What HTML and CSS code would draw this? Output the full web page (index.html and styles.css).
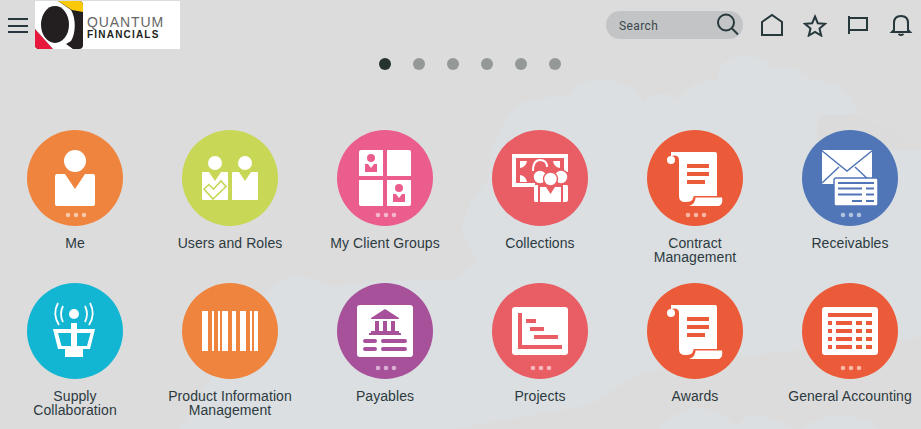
FILE: index.html
```html
<!DOCTYPE html>
<html lang="en">
  <head>
    <meta charset="UTF-8" />
    <title>Quantum Financials</title>
    <link rel="stylesheet" href="styles.css">
  </head>
  <body>
    <svg class="clouds" viewBox="0 0 921 429" aria-hidden="true">
      <path d="M500 132 C505 118 514 107 523 102 C538 97 552 96 567 97 C572 90 578 85 583 83 C592 79 600 79 607 80 C617 81 625 84 630 87 C636 92 641 98 644 103 C648 97 654 94 660 94 C668 94 675 96 680 100 C685 92 691 86 697 83 C704 80 711 80 718 80 C718 72 720 67 723 63 C730 57 739 55 747 55 C757 56 766 62 773 68 C779 67 785 67 790 68 C799 70 807 75 813 80 C823 81 832 83 840 87 C850 93 855 103 858 113 C870 116 880 122 887 127 L900 135 L921 150 V337 L733 357 L640 373 L590 405 L453 429 H180 L190 412 L263 295 L273 285 C282 279 291 277 300 277 C312 278 324 282 333 287 L385 281 L453 280 L470 268 L478 260 L467 245 C462 236 461 229 463 222 C468 204 477 190 487 182 L492 148 Z" />
      <path class="cloud-shade" d="M817 123 C820 118 823 116 827 115 L858 114 L887 127 L921 150 H860 L817 140 Z" />
      <path d="M660 429 C670 415 684 408 697 408 C712 408 727 416 737 427 C742 419 747 415 753 415 C765 415 780 421 795 429 H800 C812 421 826 415 840 415 C855 415 870 421 880 429 Z" />
    </svg>

    <header class="top-bar">
      <div class="brand">
        <button class="hamburger" aria-label="Menu"><span></span><span></span><span></span></button>
        <div class="logo">
          <svg class="logo-mark" viewBox="0 0 48 48">
            <rect width="48" height="48" rx="4" fill="#231f20" />
            <path d="M0 28 L18 48 H4 Q0 48 0 44 Z" fill="#e8173c" />
            <path d="M23 0 H44 Q48 0 48 4 V11 L37 9 Z" fill="#fbc90a" />
            <path d="M0 0 H23 L36 9 C41 17 41 32 36 40 L31 43 L38 48 H18 L0 28 Z" fill="#fff" />
            <ellipse cx="20" cy="23.500" rx="14" ry="18.500" fill="#231f20" />
          </svg>
          <div class="logo-text">
            <span class="logo-top">QUANTUM</span>
            <span class="logo-bottom">FINANCIALS</span>
          </div>
        </div>
      </div>
      <div class="actions">
        <div class="search">
          <span class="search-text">Search</span>
          <svg class="search-icon" viewBox="0 0 26 26"><circle cx="11" cy="10.5" r="8" /><path d="M17 16.5 L23 22.5" /></svg>
        </div>
        <svg class="action" viewBox="0 0 24 24"><path d="M2 22 V9 L12 2 L22 9 V22 Z" /></svg>
        <svg class="action" viewBox="0 0 24 24"><path d="M12 3.5 L14.8 10.2 L22 10.8 L16.5 15.5 L18.2 22.5 L12 18.8 L5.8 22.5 L7.5 15.5 L2 10.800 L9.2 10.2 Z" /></svg>
        <svg class="action" viewBox="0 0 24 24"><path d="M3 3 V21 M3 5 H21 V17 H3" /></svg>
        <svg class="action" viewBox="0 0 24 24"><path d="M5 17 V10 C5 5 8 3 12 3 C16 3 19 5 19 10 V17 L21 19 H3 Z M9.500 21 Q12 23 14.500 21" /></svg>
      </div>
    </header>

    <div class="pager">
      <span class="pager-dot active"></span>
      <span class="pager-dot"></span>
      <span class="pager-dot"></span>
      <span class="pager-dot"></span>
      <span class="pager-dot"></span>
      <span class="pager-dot"></span>
    </div>

    <main class="grid">
      <a class="tile">
        <svg class="circle orange" viewBox="0 0 96 96">
          <circle cx="48" cy="31" r="11" fill="#fff" />
          <path d="M30 44 H38 L48 59 L58 44 H66 Q68 44 68 46 V74 Q68 76 66 76 H30 Q28 76 28 74 V46 Q28 44 30 44 Z" fill="#fff" />
          <g class="more"><circle cx="41" cy="85" r="2.3" /><circle cx="49" cy="85" r="2.3" /><circle cx="57" cy="85" r="2.3" /></g>
        </svg>
        <span class="label">Me</span>
      </a>

      <a class="tile">
        <svg class="circle lime" viewBox="0 0 96 96">
          <circle cx="33" cy="33" r="7" fill="#fff" />
          <circle cx="63" cy="33" r="7" fill="#fff" />
          <path d="M21 42 H27 L33 51 L39 42 H45 Q46 42 46 43 V69 Q46 70 45 70 H21 Q20 70 20 69 V43 Q20 42 21 42 Z" fill="#fff" />
          <path d="M51 42 H57 L63 51 L69 42 H75 Q76 42 76 43 V69 Q76 70 75 70 H51 Q50 70 50 69 V43 Q50 42 51 42 Z" fill="#fff" />
          <path d="M22 59 L27 54.5 L31.5 59 L39 51 L44 56.5 L31 69 Z" fill="none" stroke="#c8d755" stroke-width="1.6" />
        </svg>
        <span class="label">Users and Roles</span>
      </a>

      <a class="tile">
        <svg class="circle pink" viewBox="0 0 96 96">
          <path d="M24 20 H46 V46 H22 V22 Q22 20 24 20 Z" fill="#fff" />
          <path d="M50 20 H72 Q74 20 74 22 V46 H50 Z" fill="#fff" />
          <path d="M22 50 H46 V76 H24 Q22 76 22 74 Z" fill="#fff" />
          <path d="M50 50 H74 V74 Q74 76 72 76 H50 Z" fill="#fff" />
          <circle cx="34" cy="28" r="4" fill="#ea5d8c" />
          <path d="M28 34 H31 L34 38 L37 34 H40 V42 H28 Z" fill="#ea5d8c" />
          <circle cx="62" cy="58" r="4" fill="#ea5d8c" />
          <path d="M56 64 H59 L62 68 L65 64 H68 V72 H56 Z" fill="#ea5d8c" />
          <g class="more"><circle cx="41" cy="85" r="2.3" /><circle cx="49" cy="85" r="2.3" /><circle cx="57" cy="85" r="2.3" /></g>
        </svg>
        <span class="label">My Client Groups</span>
      </a>

      <a class="tile">
        <svg class="circle coral" viewBox="0 0 96 96">
          <path d="M20 24 H76 V42 H72 V28 H24 V53 H43 V57 H20 Z" fill="#fff" />
          <path d="M28 31 H35 Q34 37 28 38 Z M68 31 H61 Q62 37 68 38 Z M28 52 V45 Q34 46 35 52 Z" fill="#fff" />
          <path d="M41 41 Q41 30 48 30 Q55 30 55 37" fill="none" stroke="#fff" stroke-width="2" />
          <circle cx="48" cy="47" r="7" fill="#fff" stroke="#e95d64" stroke-width="1.5" />
          <circle cx="69" cy="47" r="7" fill="#fff" stroke="#e95d64" stroke-width="1.5" />
          <circle cx="58.500" cy="49" r="7" fill="#fff" stroke="#e95d64" stroke-width="1.500" />
          <path d="M42 55 H46 V72 H43 Q42 72 42 70 Z M71 55 H75 Q76 55 76 57 V70 Q76 72 74 72 H71 Z" fill="#fff" />
          <path d="M48 57 H54 L58.500 64 L63 57 H69 V72 H48 Z" fill="#fff" />
        </svg>
        <span class="label">Collections</span>
      </a>

      <a class="tile">
        <svg class="circle tomato" viewBox="0 0 96 96">
          <use href="#scroll" />
          <g class="more"><circle cx="41" cy="85" r="2.3" /><circle cx="49" cy="85" r="2.3" /><circle cx="57" cy="85" r="2.3" /></g>
        </svg>
        <span class="label">Contract Management</span>
      </a>

      <a class="tile">
        <svg class="circle blue" viewBox="0 0 96 96">
          <rect x="20" y="20" width="50" height="34" fill="#fff" />
          <path d="M19 20 L45 41 L71 20 M20 53 L37 37 M53 37 L70 53" fill="none" stroke="#5076b8" stroke-width="1.500" />
          <rect x="32" y="48" width="44" height="28" rx="2" fill="#fff" stroke="#5076b8" stroke-width="1.500" />
          <path d="M36 53 H72 M36 58.500 H60 M64 58.500 H72 M36 64.500 H60 M64 64.500 H72 M50 71 H60 M64 71 H72" stroke="#5076b8" stroke-width="1.800" />
          <g class="more"><circle cx="41" cy="85" r="2.3" /><circle cx="49" cy="85" r="2.3" /><circle cx="57" cy="85" r="2.3" /></g>
        </svg>
        <span class="label">Receivables</span>
      </a>

      <a class="tile">
        <svg class="circle cyan" viewBox="0 0 96 96">
          <circle cx="47" cy="31" r="5" fill="#fff" />
          <path d="M36 23 Q32 31 36 39 M58 23 Q62 31 58 39" fill="none" stroke="#fff" stroke-width="1.8" />
          <path d="M31 20 Q25 31 32 42 M63 20 Q69 31 62 42" fill="none" stroke="#fff" stroke-width="1.800" />
          <path d="M44 40 H50 V46 H68 L63 66 H56 V74 H38 V66 H31 L26 46 H44 Z M44 50 H31 L34.500 63 H44 Z M50 50 V63 H60 L63.500 50 Z" fill="#fff" fill-rule="evenodd" />
        </svg>
        <span class="label">Supply Collaboration</span>
      </a>

      <a class="tile">
        <svg class="circle orange" viewBox="0 0 96 96">
          <path d="M20 28 H26 V68 H20 Z M30 28 H32 V68 H30 Z M36 28 H38 V68 H36 Z M40 28 H46 V68 H40 Z M50 28 H54 V68 H50 Z M58 28 H64 V68 H58 Z M68 28 H70 V68 H68 Z M72 28 H76 V68 H72 Z" fill="#fff" />
        </svg>
        <span class="label">Product Information Management</span>
      </a>

      <a class="tile">
        <svg class="circle purple" viewBox="0 0 96 96">
          <rect x="20" y="22" width="56" height="52" rx="3" fill="#fff" />
          <path d="M48 26 L62 35 V36 H34 V35 Z M38 38 H42 V48 H38 Z M46 38 H50 V48 H46 Z M54 38 H58 V48 H54 Z M34 48 H62 V50 H64 V52 H32 V50 H34 Z" fill="#a8519b" />
          <path d="M28 58 H38 M46 58 H68 M28 66 H38 M46 66 H68" stroke="#a8519b" stroke-width="4" stroke-linecap="round" />
          <g class="more"><circle cx="41" cy="85" r="2.3" /><circle cx="49" cy="85" r="2.3" /><circle cx="57" cy="85" r="2.3" /></g>
        </svg>
        <span class="label">Payables</span>
      </a>

      <a class="tile">
        <svg class="circle coral" viewBox="0 0 96 96">
          <rect x="20" y="24" width="56" height="48" rx="3" fill="#fff" />
          <path d="M26 30 H30 V62 H70 V66 H26 Z M34 36 H44 V40 H34 Z M38 44 H52 V48 H38 Z M42 52 H66 V56 H42 Z" fill="#e95d64" />
          <g class="more"><circle cx="41" cy="85" r="2.3" /><circle cx="49" cy="85" r="2.3" /><circle cx="57" cy="85" r="2.3" /></g>
        </svg>
        <span class="label">Projects</span>
      </a>

      <a class="tile">
        <svg class="circle tomato" viewBox="0 0 96 96">
          <use href="#scroll" />
        </svg>
        <span class="label">Awards</span>
      </a>

      <a class="tile">
        <svg class="circle tomato" viewBox="0 0 96 96">
          <rect x="20" y="24" width="56" height="48" rx="3" fill="#fff" />
          <path d="M26 30 H70 V34 H26 Z M26 38 H30 V42 H26 Z M34 38 H50 V42 H34 Z M54 38 H60 V42 H54 Z M64 38 H70 V42 H64 Z M26 46 H30 V50 H26 Z M34 46 H50 V50 H34 Z M54 46 H60 V50 H54 Z M64 46 H70 V50 H64 Z M26 54 H30 V58 H26 Z M34 54 H50 V58 H34 Z M54 54 H60 V58 H54 Z M64 54 H70 V58 H64 Z M26 62 H30 V66 H26 Z M34 62 H50 V66 H34 Z M54 62 H60 V66 H54 Z M64 62 H70 V66 H64 Z" fill="#ec5b39" />
          <g class="more"><circle cx="41" cy="85" r="2.3" /><circle cx="49" cy="85" r="2.3" /><circle cx="57" cy="85" r="2.3" /></g>
        </svg>
        <span class="label">General Accounting</span>
      </a>
    </main>

    <svg class="defs" aria-hidden="true">
      <symbol id="scroll" viewBox="0 0 96 96">
        <circle cx="24" cy="30" r="4" fill="#fff" />
        <path d="M24 22 H68 Q70 22 70 24 V66 H48 Q46 66 46 68 Q46 72 38 72 Q32 72 32 66 V30 Q32 24 24 26 Z" fill="#fff" />
        <path d="M48.500 67.500 H75 Q76.500 74 72 76 H42 Q48.500 74 48.500 67.500 Z" fill="#fff" />
        <path d="M40 34 H62 V38 H40 Z M40 42 H62 V46 H40 Z M40 50 H58 V54 H40 Z" fill="#ec5b39" />
      </symbol>
    </svg>
  </body>
</html>
```

FILE: styles.css
```css
* {
  box-sizing: border-box;
  margin: 0;
  padding: 0;
}

html,
body {
  height: 100%;
  overflow: hidden;
}

body {
  position: relative;
  font-family: "Liberation Sans", Arial, sans-serif;
  background: #dcdcdc;
  color: #2c3a3f;
}

.clouds {
  position: absolute;
  top: 0;
  left: 0;
  width: 100%;
  height: 100%;
  fill: #dbdfe1;
}

.cloud-shade {
  fill: #dcdbdb;
}

.defs {
  position: absolute;
  width: 0;
  height: 0;
}

.top-bar {
  position: relative;
  display: flex;
  justify-content: space-between;
  align-items: flex-start;
  height: 50px;
  padding: 1px 8px 0 8px;
}

.brand {
  display: flex;
  align-items: flex-start;
}

.hamburger {
  display: flex;
  flex-direction: column;
  gap: 4.500px;
  width: 27px;
  padding-top: 17px;
  background: none;
  border: none;
}

.hamburger span {
  display: block;
  width: 20px;
  height: 2px;
  background: #26383c;
}

.logo {
  display: flex;
  width: 145px;
  height: 48px;
  background: #ffffff;
}

.logo-mark {
  width: 48px;
  height: 48px;
}

.logo-text {
  display: flex;
  flex-direction: column;
  padding: 14px 0 0 4px;
  color: #231f20;
}

.logo-top {
  font-size: 14px;
  line-height: 14px;
  letter-spacing: 0.9px;
  color: #666;
}

.logo-bottom {
  font-size: 10px;
  font-weight: 700;
  line-height: 12px;
  letter-spacing: 1.2px;
}

.actions {
  display: flex;
  align-items: center;
  height: 48px;
  gap: 19px;
}

.search {
  display: flex;
  justify-content: space-between;
  align-items: center;
  width: 137px;
  height: 28px;
  padding: 0 2px 0 13px;
  margin-right: -2px;
  background: #c3c4c6;
  border-radius: 14px;
  font-family: Roboto, sans-serif;
  font-size: 12px;
  letter-spacing: 0.4px;
  color: #3a474a;
}

.search-text {
  padding-top: 2px;
}

.search-icon {
  width: 26px;
  height: 26px;
  fill: none;
  stroke: #26383c;
  stroke-width: 2;
}

.action {
  width: 24px;
  height: 24px;
  fill: none;
  stroke: #26383c;
  stroke-width: 2;
}

.pager {
  position: relative;
  display: flex;
  justify-content: center;
  gap: 22px;
  padding: 8px 0 0 19px;
}

.pager-dot {
  width: 12px;
  height: 12px;
  border-radius: 50%;
  background: #949897;
}

.pager-dot.active {
  background: #26332f;
}

.grid {
  position: relative;
  display: grid;
  grid-template-columns: repeat(6, 155px);
  grid-auto-rows: 153px;
  margin: 60px 0 0 -2.500px;
}

.tile {
  display: flex;
  flex-direction: column;
  align-items: center;
  text-align: center;
}

.circle {
  flex: none;
  width: 96px;
  height: 96px;
  border-radius: 50%;
}

.more {
  fill: #ffffff;
  opacity: 0.55;
}

.orange { background: #ef843f; }
.lime { background: #c8d755; }
.pink { background: #ea5d8c; }
.coral { background: #e95d64; }
.tomato { background: #ec5b39; }
.blue { background: #5076b8; }
.cyan { background: #12b5d2; }
.purple { background: #a8519b; }

.label {
  width: 127px;
  margin-top: 10px;
  font-size: 14px;
  line-height: 14px;
  letter-spacing: 0.08px;
}
```
